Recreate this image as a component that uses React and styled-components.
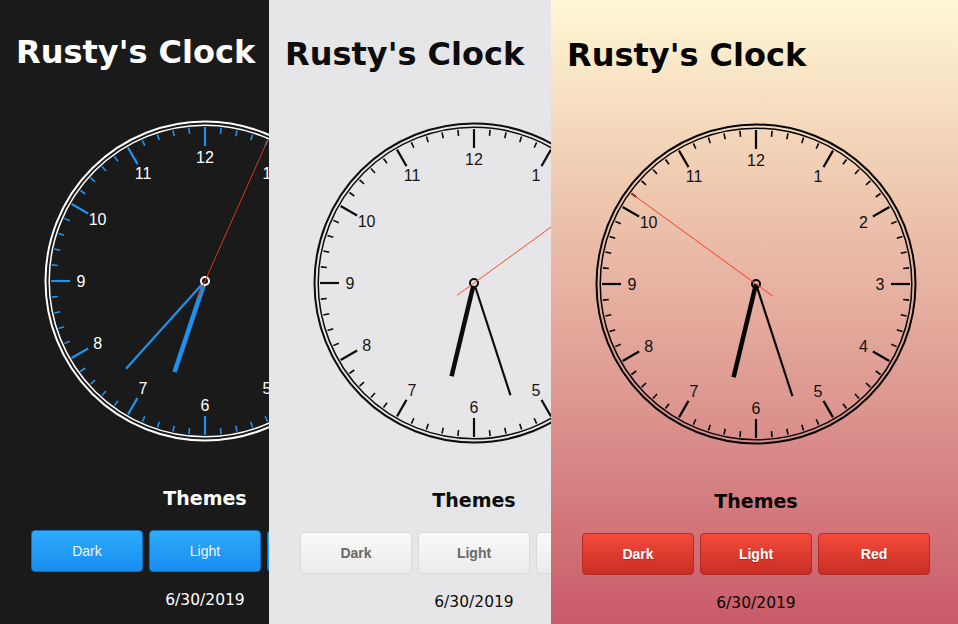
import styled, { createGlobalStyle } from "styled-components"

const GlobalStyle = createGlobalStyle`
    html, body {
        margin: 0;
        padding: 0;
        overflow: hidden;
    }
    body {
        font-family: "DejaVu Sans", sans-serif;
    }
`

const themes = {
    dark: {
        bg: "#1a1a1a",
        text: "#ffffff",
        ring: "#ffffff",
        tick: "#1e92ec",
        number: "#ffffff",
        hand: "#1e92ec",
        second: "#e0341c",
        hub: "#1a1a1a",
        btnTop: "#2eabfa",
        btnBottom: "#178df0",
        btnBorder: "#0f6fb8",
        btnText: "#f2f6fb",
        btnWeight: 400,
        btnShadow: "none",
    },
    light: {
        bg: "#e6e6e8",
        text: "#0d0d0d",
        ring: "#0d0d0d",
        tick: "#0d0d0d",
        number: "#151515",
        hand: "#0d0d0d",
        second: "#ff4a2a",
        hub: "#e6e6e8",
        btnTop: "#f9f9f9",
        btnBottom: "#ebebeb",
        btnBorder: "#d9d9db",
        btnText: "#6a6a6a",
        btnWeight: 700,
        btnShadow: "none",
    },
    red: {
        bg: "linear-gradient(180deg, #fff8d4 0%, #efc9b0 30%, #dd9690 65%, #c95a68 100%)",
        text: "#050505",
        ring: "#050505",
        tick: "#050505",
        number: "#111111",
        hand: "#050505",
        second: "#ff3d1f",
        hub: "transparent",
        btnTop: "#f44a3c",
        btnBottom: "#c82e24",
        btnBorder: "#b52a22",
        btnText: "#ffffff",
        btnWeight: 700,
        btnShadow: "0 1px 1px rgba(0,0,0,0.25)",
    },
}

const Page = styled.div`
    display: flex;
    width: 958px;
    height: 624px;
    overflow: hidden;
`

const Panel = styled.section`
    flex: ${({ $width }) => ($width ? `0 0 ${$width}px` : "1 1 auto")};
    height: 624px;
    overflow: hidden;
    background: ${({ $theme }) => $theme.bg};
`

const Inner = styled.div`
    width: 410px;
    padding-top: ${({ $shift }) => $shift}px;
    display: flex;
    flex-direction: column;
    align-items: center;
    color: ${({ $theme }) => $theme.text};
`

const Title = styled.h1`
    align-self: flex-start;
    margin: 0;
    padding: 34px 0 0 16px;
    font-family: "DejaVu Sans", sans-serif;
    font-weight: 700;
    font-size: 32px;
    line-height: 37px;
`

const Face = styled.svg`
    display: block;
    margin-top: 45px;
    width: 330px;
    height: 330px;
`

const Themes = styled.h2`
    margin: 40px 0 0;
    font-family: "DejaVu Sans", sans-serif;
    font-weight: 700;
    font-size: 19px;
    line-height: 24px;
`

const ButtonRow = styled.div`
    display: flex;
    gap: 6px;
    margin-top: 20px;
`

const ThemeButton = styled.button`
    width: 112px;
    height: 42px;
    border-radius: 4px;
    border: 1px solid ${({ $theme }) => $theme.btnBorder};
    background: linear-gradient(180deg, ${({ $theme }) => $theme.btnTop}, ${({ $theme }) => $theme.btnBottom});
    color: ${({ $theme }) => $theme.btnText};
    font-family: "Liberation Sans", Arial, sans-serif;
    font-size: 14px;
    font-weight: ${({ $theme }) => $theme.btnWeight};
    text-shadow: ${({ $theme }) => $theme.btnShadow};
    cursor: pointer;
    padding: 0;
`

const DateLine = styled.div`
    margin-top: 18px;
    font-family: "DejaVu Sans", sans-serif;
    font-size: 15.5px;
    line-height: 20px;
`

const polar = (deg, r) => {
    const a = ((deg - 90) * Math.PI) / 180
    return [Math.cos(a) * r, Math.sin(a) * r]
}

const Clock = ({ theme, h, m, s }) => {
    const minuteDeg = m * 6
    const hourDeg = (h % 12 + m / 60) * 30
    const secondDeg = s * 6
    const [hx, hy] = polar(hourDeg, 96)
    const [mx, my] = polar(minuteDeg, 118)
    const [sx, sy] = polar(secondDeg, 155)
    const [tx, ty] = polar(secondDeg + 180, 21)

    const ticks = []
    for (let i = 0; i < 60; i++) {
        const major = i % 5 === 0
        const [x1, y1] = polar(i * 6, major ? 135 : 148)
        const [x2, y2] = polar(i * 6, 154)
        ticks.push(
            <line key={i} x1={x1} y1={y1} x2={x2} y2={y2}
                stroke={theme.tick} strokeWidth={major ? 2.2 : 1.6} />
        )
    }

    const numbers = []
    for (let n = 1; n <= 12; n++) {
        const [x, y] = polar(n * 30, 124)
        numbers.push(
            <text key={n} x={x} y={y} fill={theme.number}
                fontFamily="'Liberation Sans', Arial, sans-serif" fontSize="16"
                textAnchor="middle" dominantBaseline="central">{n}</text>
        )
    }

    return (
        <Face viewBox="-165 -165 330 330">
            <circle r="159.5" fill="none" stroke={theme.ring} strokeWidth="2" />
            <circle r="155.8" fill="none" stroke={theme.ring} strokeWidth="1.5" />
            {ticks}
            {numbers}
            <line x1="0" y1="0" x2={hx} y2={hy} stroke={theme.hand} strokeWidth="4.5" />
            <line x1="0" y1="0" x2={mx} y2={my} stroke={theme.hand} strokeWidth="2.2" />
            <circle r="4" fill={theme.hub} stroke={theme.ring} strokeWidth="2" />
            <line x1={tx} y1={ty} x2={sx} y2={sy} stroke={theme.second} strokeWidth="1" />
        </Face>
    )
}

const ClockApp = ({ theme, width, shift, time }) => (
    <Panel $theme={theme} $width={width}>
        <Inner $theme={theme} $shift={shift}>
            <Title>Rusty's Clock</Title>
            <Clock theme={theme} {...time} />
            <Themes>Themes</Themes>
            <ButtonRow>
                <ThemeButton $theme={theme}>Dark</ThemeButton>
                <ThemeButton $theme={theme}>Light</ThemeButton>
                <ThemeButton $theme={theme}>Red</ThemeButton>
            </ButtonRow>
            <DateLine>6/30/2019</DateLine>
        </Inner>
    </Panel>
)

export default function App() {
    return (
        <>
            <GlobalStyle />
            <Page>
                <ClockApp theme={themes.dark} width={269} shift={0} time={{ h: 6, m: 37, s: 4 }} />
                <ClockApp theme={themes.light} width={282} shift={2} time={{ h: 6, m: 27, s: 9 }} />
                <ClockApp theme={themes.red} shift={3} time={{ h: 6, m: 27, s: 51 }} />
            </Page>
        </>
    )
}
